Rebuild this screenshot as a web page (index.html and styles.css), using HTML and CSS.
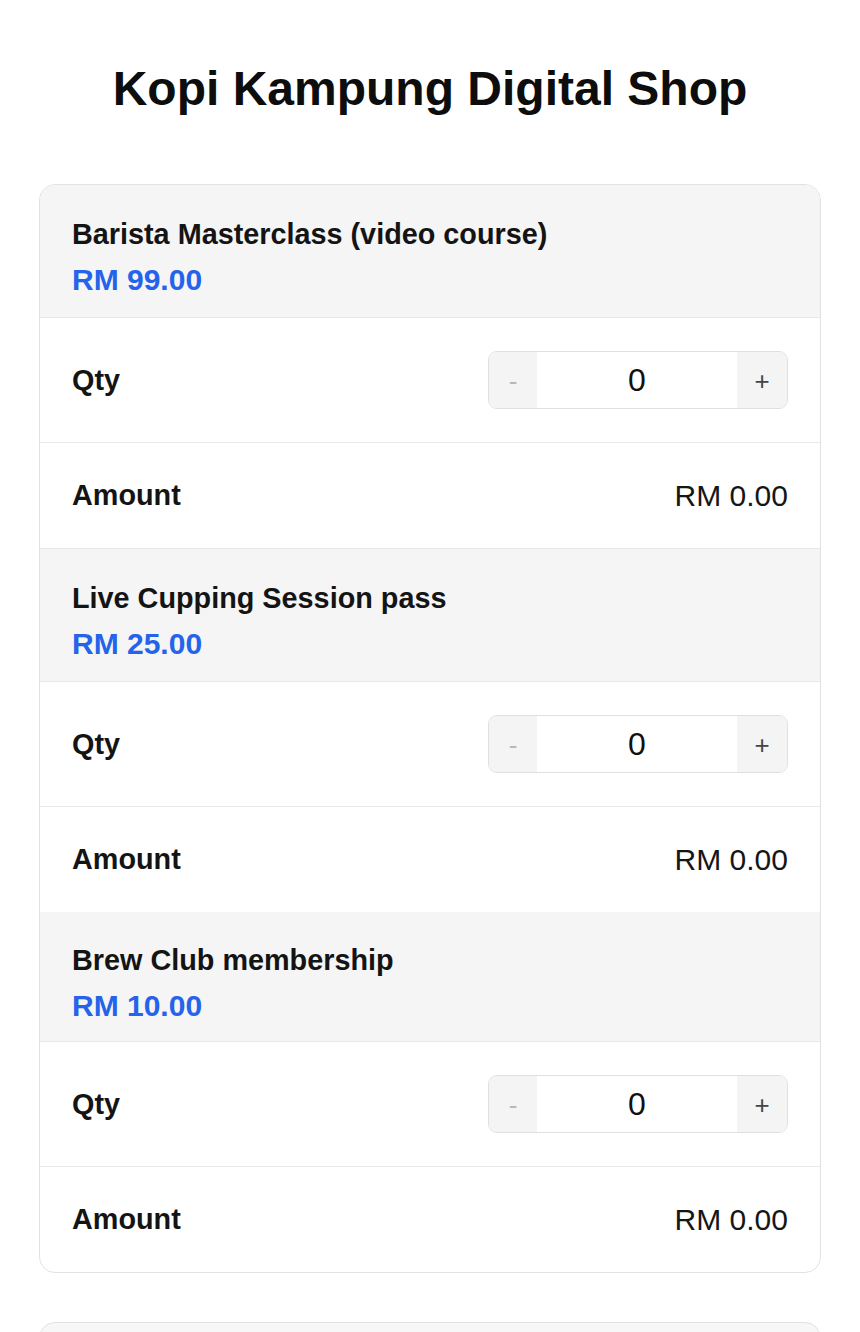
FILE: index.html
```html
<!DOCTYPE html>
<html lang="en">
<head>
<meta charset="utf-8">
<title>Kopi Kampung Digital Shop</title>
<link rel="stylesheet" href="styles.css">
</head>
<body>
<main class="page">
  <h1 class="title">Kopi Kampung Digital Shop</h1>

  <section class="card">
    <div class="item-head head-first">
      <div class="item-name">Barista Masterclass (video course)</div>
      <div class="item-price">RM 99.00</div>
    </div>
    <div class="row row-qty">
      <span class="label">Qty</span>
      <div class="stepper">
        <button class="step step-minus" disabled>-</button>
        <input class="step-input" type="text" value="0">
        <button class="step step-plus">+</button>
      </div>
    </div>
    <div class="row row-amount">
      <span class="label">Amount</span>
      <span class="value">RM 0.00</span>
    </div>

    <div class="item-head head-mid">
      <div class="item-name">Live Cupping Session pass</div>
      <div class="item-price">RM 25.00</div>
    </div>
    <div class="row row-qty">
      <span class="label">Qty</span>
      <div class="stepper">
        <button class="step step-minus" disabled>-</button>
        <input class="step-input" type="text" value="0">
        <button class="step step-plus">+</button>
      </div>
    </div>
    <div class="row row-amount">
      <span class="label">Amount</span>
      <span class="value">RM 0.00</span>
    </div>

    <div class="item-head head-last">
      <div class="item-name">Brew Club membership</div>
      <div class="item-price">RM 10.00</div>
    </div>
    <div class="row row-qty">
      <span class="label">Qty</span>
      <div class="stepper">
        <button class="step step-minus" disabled>-</button>
        <input class="step-input" type="text" value="0">
        <button class="step step-plus">+</button>
      </div>
    </div>
    <div class="row row-amount">
      <span class="label">Amount</span>
      <span class="value">RM 0.00</span>
    </div>
  </section>

  <section class="card card-next"></section>
</main>
</body>
</html>
```

FILE: styles.css
```css
* { box-sizing: border-box; }
html, body { margin: 0; padding: 0; background: #fff; }
body {
  font-family: "Liberation Sans", Arial, sans-serif;
  color: #161616;
}
.page {
  width: 782px;
  margin: 0 auto;
  padding-top: 57px;
}
.title {
  margin: 0 0 63px;
  text-align: center;
  font-size: 48px;
  line-height: 64px;
  font-weight: 700;
  color: #0d0d0d;
}
.card {
  border: 1px solid #e2e2e2;
  border-radius: 16px;
  overflow: hidden;
  background: #fff;
}
.item-head {
  background: #f5f5f5;
  padding: 31px 32px 17px;
}
.head-mid { border-top: 1px solid #e6e6e6; }
.head-last { padding-top: 30px; padding-bottom: 15px; }
.item-name {
  font-size: 28.8px;
  line-height: 36px;
  font-weight: 700;
  color: #141414;
}
.item-price {
  margin-top: 8px;
  font-size: 30px;
  line-height: 40px;
  font-weight: 700;
  color: #2563eb;
}
.row {
  display: flex;
  align-items: center;
  justify-content: space-between;
  padding: 0 32px;
  border-top: 1px solid #e8e8e8;
}
.row-qty { height: 125px; }
.row-amount { height: 106px; }
.label {
  font-size: 28.8px;
  font-weight: 700;
  color: #141414;
}
.value {
  font-size: 30px;
  font-weight: 400;
  color: #161616;
}
.stepper {
  display: flex;
  width: 300px;
  height: 58px;
  border: 1px solid #e0e0e0;
  border-radius: 9px;
  overflow: hidden;
}
.step {
  width: 48px;
  border: none;
  background: #f4f4f4;
  font-family: inherit;
  font-size: 26px;
  padding: 2px 0 0;
  color: #444;
}
.step-minus { color: #b8b8b8; }
.step-plus { width: 50px; }
.step-input {
  flex: 1;
  min-width: 0;
  border: none;
  background: #fff;
  text-align: center;
  font-family: inherit;
  font-size: 32px;
  color: #111;
  padding: 0;
  outline: none;
}
.card-next {
  margin-top: 49px;
  height: 60px;
  background: #f7f7f7;
}
```
